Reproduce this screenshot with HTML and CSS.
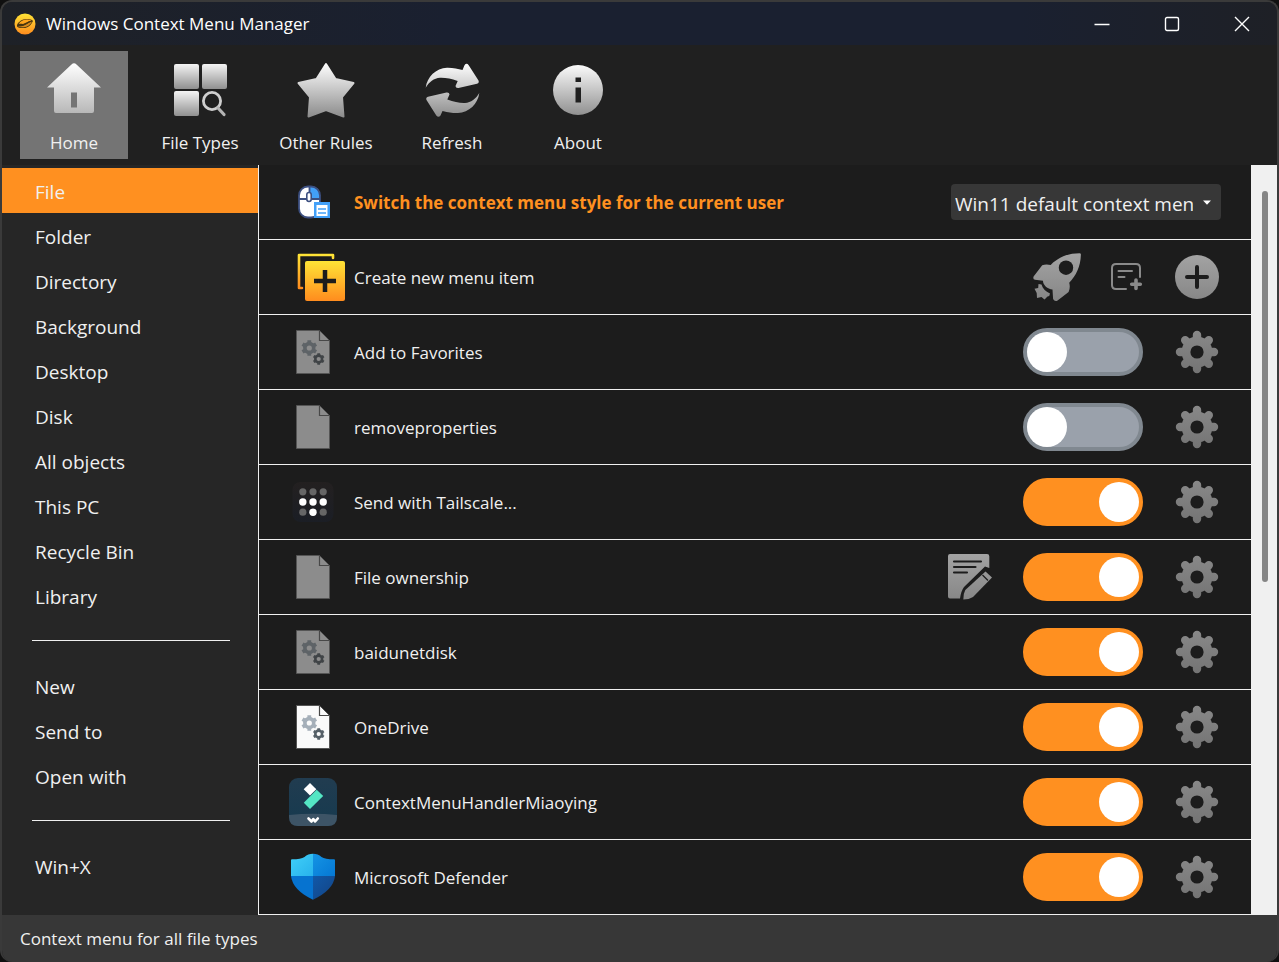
FILE: index.html
```html
<!DOCTYPE html>
<html lang="en">
<head>
<meta charset="utf-8">
<title>Windows Context Menu Manager</title>
<link rel="stylesheet" href="styles.css">
</head>
<body>
<svg class="defs" aria-hidden="true">
  <defs>
    <linearGradient id="silver" gradientUnits="userSpaceOnUse" x1="0" y1="6" x2="0" y2="60"><stop offset="0" stop-color="#ffffff"/><stop offset="1" stop-color="#8c8c8c"/></linearGradient>
    <linearGradient id="silver-light" x1="0" y1="0" x2="0" y2="1"><stop offset="0" stop-color="#ffffff"/><stop offset="1" stop-color="#b8b8b8"/></linearGradient>
    <linearGradient id="tile" x1="0" y1="0" x2="0" y2="1"><stop offset="0" stop-color="#f4f4f4"/><stop offset="1" stop-color="#909090"/></linearGradient>
    <linearGradient id="grey" gradientUnits="userSpaceOnUse" x1="0" y1="0" x2="0" y2="48"><stop offset="0" stop-color="#a4a4a4"/><stop offset="1" stop-color="#868686"/></linearGradient>
    <linearGradient id="gear-grey" gradientUnits="userSpaceOnUse" x1="0" y1="3" x2="0" y2="45"><stop offset="0" stop-color="#888888"/><stop offset="1" stop-color="#747474"/></linearGradient>
    <linearGradient id="amber" x1="0" y1="0" x2="0" y2="1"><stop offset="0" stop-color="#ffe436"/><stop offset="1" stop-color="#ff8c1e"/></linearGradient>
    <linearGradient id="film" x1="0" y1="0" x2="0" y2="1"><stop offset="0" stop-color="#213c50"/><stop offset="1" stop-color="#163a4f"/></linearGradient>
    <linearGradient id="shield-a" x1="0" y1="0" x2="1" y2="1"><stop offset="0" stop-color="#40d0f8"/><stop offset="1" stop-color="#28b2ec"/></linearGradient>
    <linearGradient id="shield-b" x1="0" y1="0" x2="1" y2="1"><stop offset="0" stop-color="#1594e4"/><stop offset="1" stop-color="#0578d4"/></linearGradient>
    <linearGradient id="shield-d" x1="0" y1="0" x2="1" y2="1"><stop offset="0" stop-color="#1158a8"/><stop offset="1" stop-color="#134484"/></linearGradient>
    <linearGradient id="tail" x1="0" y1="0" x2="0" y2="1"><stop offset="0" stop-color="#232020"/><stop offset="1" stop-color="#1b1e25"/></linearGradient>
  </defs>
  <symbol id="gear" viewBox="0 0 48 48">
    <circle cx="24" cy="24" r="15.4" fill="url(#gear-grey)"/>
    <path d="M24 7v34M7 24h34M12.2 12.2l23.6 23.6M35.8 12.2L12.2 35.8" stroke="url(#gear-grey)" stroke-width="8.4" stroke-linecap="round"/>
    <circle cx="24" cy="24" r="6.6" fill="#1c1c1c"/>
  </symbol>
  <symbol id="page" viewBox="0 0 56 50">
    <path d="M7.5 3.5h23l10 10v33h-33z" fill="currentColor" stroke="#555" stroke-width="1"/>
    <path d="M30.5 3.5v10h10" fill="none" stroke="#484848" stroke-width="1.2"/>
  </symbol>
  <symbol id="cogs" viewBox="0 0 56 50">
    <g fill="none" stroke="currentColor">
      <circle cx="20.3" cy="21" r="4.4" stroke-width="3.6"/>
      <path d="M20.3 13.2v3M20.3 25.800v3M13.500 17.100l2.700 1.600M24.400 23.300l2.700 1.600M27.100 17.100l-2.700 1.600M16.200 23.300l-2.700 1.600" stroke-width="3.8"/>
    </g>
    <g class="cog-small" fill="none">
      <circle cx="29.700" cy="32" r="3.400" stroke-width="2.600"/>
      <path d="M29.700 26.200v2.400M29.700 35.400v2.400M24.700 29.100l2 1.200M32.700 33.700l2 1.200M34.700 29.100l-2 1.200M26.700 33.700l-2 1.200" stroke-width="2.800"/>
    </g>
  </symbol>
</svg>

<div class="window">
  <header class="titlebar">
    <svg class="logo" viewBox="0 0 22 22" aria-hidden="true">
      <circle cx="11" cy="11" r="10.500" fill="url(#amber)"/>
      <path d="M3 13.500c-.8-3 4.500-7.500 9-7.500 3.500 0 6.200.4 7 2-2 4.500-5.500 7-9 7-2.500.2-5.500.3-7-1.500z" fill="#4b3710"/>
      <path d="M4.500 11c2-3 5-4.500 8-4.500 2 0 4 .2 5 1-3 .5-4.500 2.500-6.500 3.200-2 .7-4.500-.2-6.500.3z" fill="#ffa51d"/>
      <path d="M3.500 13c3 .8 5.500 0 8-1.300 2-1 4-2.400 6.500-3-2 3.500-5 5.300-8 5.500-2.500.2-5 .1-6.500-1.200z" fill="#d88a1c"/>
      <path d="M4 12.700c4 .4 7-2 12.500-4.500" stroke="#4b3710" stroke-width="1.200" fill="none"/>
    </svg>
    <h1>Windows Context Menu Manager</h1>
    <button class="caption" aria-label="Minimize"><svg viewBox="0 0 16 16"><path d="M.5 8.500h15"/></svg></button>
    <button class="caption" aria-label="Maximize"><svg viewBox="0 0 16 16"><rect x="1.500" y="1.500" width="13" height="13" rx="1.500"/></svg></button>
    <button class="caption" aria-label="Close"><svg viewBox="0 0 16 16"><path d="M1 1l14 14M15 1L1 15"/></svg></button>
  </header>

  <nav class="toolbar" aria-label="Sections">
    <button class="tool active">
      <svg viewBox="0 0 64 64"><path d="M29.500 7.500q2.500-2.500 5 0L59 30.500h-7V54q0 2-2 2H14q-2 0-2-2V30.500H5z" fill="url(#silver-light)"/><path d="M29 35.500h6v15h-6z" fill="#747474"/></svg>
      <span>Home</span>
    </button>
    <button class="tool">
      <svg viewBox="0 0 64 64"><g fill="url(#tile)"><rect x="6" y="7" width="25" height="25" rx="2"/><rect x="34" y="7" width="25" height="25" rx="2"/><rect x="6" y="34" width="25" height="25" rx="2"/></g><circle cx="44" cy="44" r="8.600" fill="none" stroke="#cfcfcf" stroke-width="2.800"/><path d="M50 51l6 6.500" stroke="#b4b4b4" stroke-width="3.200" stroke-linecap="round"/></svg>
      <span>File Types</span>
    </button>
    <button class="tool">
      <svg viewBox="0 0 64 64"><path d="M32 7l9.500 15 18 4L48 40l1.500 19.500L32 53l-17.500 6.500L16 40 4.500 26l18-4z" fill="url(#silver)" stroke="url(#silver)" stroke-width="2" stroke-linejoin="round"/></svg>
      <span>Other Rules</span>
    </button>
    <button class="tool">
      <svg viewBox="0 0 64 64"><path d="M5.700 30.700C7 20 16 11 27 10.700c6-.1 11 1 15.500 2.300l2-4.800q2-2.700 4.200 0L58.500 23.500q1 2.500-1.500 3.300l-18.500 4.200q-3 .3-3-2l2.200-5C31 21.500 25.500 20.500 20 20.700 14 21 9 25 5.700 30.700z" fill="url(#silver)"/><path d="M59.300 35.900C58 46.600 49 55.600 38 55.900c-6 .1-9-.5-15.500-2l-2 4.500q-2 2.700-4.200 0L6.500 43q-1-2.500 1.500-3.300l18.500-4.200q3-.3 3 2l-2.200 5c6.700 2.500 12.200 3.600 17.700 3.400 6-.3 11-4.300 14.300-10z" fill="url(#silver)"/></svg>
      <span>Refresh</span>
    </button>
    <button class="tool">
      <svg viewBox="0 0 64 64"><circle cx="32" cy="33" r="25" fill="url(#silver)"/><path d="M29.500 20.500H35V25h-5.500zM29.500 30.500H35v15h-5.500z" fill="#202020"/></svg>
      <span>About</span>
    </button>
  </nav>

  <div class="content">
    <nav class="sidebar" aria-label="Menu locations">
      <a class="selected" href="#file">File</a>
      <a href="#folder">Folder</a>
      <a href="#directory">Directory</a>
      <a href="#background">Background</a>
      <a href="#desktop">Desktop</a>
      <a href="#disk">Disk</a>
      <a href="#all">All objects</a>
      <a href="#pc">This PC</a>
      <a href="#bin">Recycle Bin</a>
      <a href="#library">Library</a>
      <hr>
      <a href="#new">New</a>
      <a href="#send">Send to</a>
      <a href="#open">Open with</a>
      <hr>
      <a href="#winx">Win+X</a>
    </nav>

    <main class="list">
      <div class="row">
        <svg class="icon" viewBox="0 0 56 50"><rect x="10" y="9.500" width="21" height="31" rx="9" fill="#fff"/><path d="M20.500 9.500h1.500q9 0 9 9V22H20.500z" fill="#42a0f8"/><rect x="10" y="9.500" width="21" height="31" rx="9" fill="none" stroke="#3c4f80" stroke-width="1.800"/><path d="M10 22h21M20.500 9.500v8" stroke="#3c4f80" stroke-width="1.800"/><rect x="17.800" y="15.500" width="4.400" height="9" rx="2.200" fill="#fff" stroke="#3c4f80" stroke-width="1.600"/><path d="M25 25h16v16H25z" fill="#42a0f8"/><path d="M27.500 28h11v11h-11z" fill="#fff"/><path d="M29 32h8M29 36h8" stroke="#42a0f8" stroke-width="1.500"/></svg>
        <label class="name accent" for="style">Switch the context menu style for the current user</label>
        <div class="combo">
          <select id="style"><option>Win11 default context men</option><option>Win10 classic context menu</option></select>
          <svg viewBox="0 0 8 5" aria-hidden="true"><path d="M0 .5h8L4 4.800z" fill="#fff"/></svg>
        </div>
      </div>
      <div class="row create">
        <svg class="icon" viewBox="0 0 56 50"><path d="M13 36h-3V3h34v3" fill="none" stroke="url(#amber)" stroke-width="2.600" stroke-linecap="round" stroke-linejoin="round"/><rect x="16" y="9" width="40" height="40" rx="2" fill="url(#amber)"/><path d="M36 18v22M25 29h22" stroke="#1c1c1c" stroke-width="4.500"/></svg>
        <span class="name">Create new menu item</span>
        <button class="action" aria-label="Enhanced menus"><svg viewBox="0 0 48 48"><path d="M46.500.2C38 .2 27 2.500 17.700 11.900q-5-1-8.500.3L.6 23.500q-1 3 1.500 3.200l7.900 1c-.2 4 4.500 8.500 9.500 8.700l.6 9.600q1.500 3 4.500 1.500l11-8.500q2-4.500.6-9.300C43 22.500 47.500 14 47.900 1.500q0-1.200-1.400-1.300z" fill="url(#grey)"/><circle cx="33" cy="14.700" r="7.200" fill="#1c1c1c"/><path d="M5.500 31l3 .5c1 4 4 7 8.500 9q0 2.500-2.500 3l-3 3-3-2.500-4.500 1-.3-5-2.200-4.200 3.700-.8z" fill="url(#grey)"/></svg></button>
        <button class="action" aria-label="Add from template"><svg viewBox="0 0 48 48" fill="none" stroke="#8a8a8a" stroke-linecap="round"><path d="M37 24v-9q0-4-4-4H13q-4 0-4 4v17q0 4 4 4h10M15.500 18H29M15.500 24h6" stroke-width="2"/><path d="M33 27v8.500M28.700 31.200h8.600" stroke-width="3.600"/></svg></button>
        <button class="action" aria-label="Add item"><svg viewBox="0 0 48 48"><circle cx="24" cy="24" r="22" fill="url(#grey)"/><path d="M24 14v20M14 24h20" stroke="#1c1c1c" stroke-width="4" stroke-linecap="round"/></svg></button>
      </div>
      <div class="row">
        <svg class="icon dim" viewBox="0 0 56 50"><use href="#page"/><use class="cogs" href="#cogs"/></svg>
        <label class="name" for="t1">Add to Favorites</label>
        <input class="switch" type="checkbox" id="t1">
        <button class="action" aria-label="Options"><svg><use href="#gear"/></svg></button>
      </div>
      <div class="row">
        <svg class="icon dim" viewBox="0 0 56 50"><use href="#page"/></svg>
        <label class="name" for="t2">removeproperties</label>
        <input class="switch" type="checkbox" id="t2">
        <button class="action" aria-label="Options"><svg><use href="#gear"/></svg></button>
      </div>
      <div class="row">
        <svg class="icon" viewBox="0 0 56 50"><rect x="3.500" y="5" width="41" height="40" rx="8" fill="url(#tail)"/><g fill="#666"><circle cx="13.800" cy="14.800" r="3.600"/><circle cx="24" cy="14.800" r="3.600"/><circle cx="34.200" cy="14.800" r="3.600"/><circle cx="13.800" cy="35.200" r="3.600"/><circle cx="34.200" cy="35.200" r="3.600"/></g><g fill="#fff"><circle cx="13.800" cy="25" r="3.700"/><circle cx="24" cy="25" r="3.700"/><circle cx="34.200" cy="25" r="3.700"/><circle cx="24" cy="35.200" r="3.700"/></g></svg>
        <label class="name" for="t3">Send with Tailscale...</label>
        <input class="switch" type="checkbox" id="t3" checked>
        <button class="action" aria-label="Options"><svg><use href="#gear"/></svg></button>
      </div>
      <div class="row">
        <svg class="icon dim" viewBox="0 0 56 50"><use href="#page"/></svg>
        <label class="name" for="t4">File ownership</label>
        <button class="action" aria-label="Edit"><svg viewBox="0 0 48 48"><path d="M5 1h37q2.300 0 2.300 2.300V15L40 13.500 19 34q-3 4-4 11.500H5q-2 0-2-2V3q0-2 2-2z" fill="url(#grey)"/><path d="M9 8.500h27M9 14h21.500M9 19.500h13" stroke="#1c1c1c" stroke-width="2.100" stroke-linecap="round"/><path d="M18.300 46.500q0-6 2-9.500L40.500 18.500l6.500 6L28 44q-4 2.500-9.700 2.500z" fill="url(#grey)"/><path d="M37.500 22l5.500 5.500" stroke="#1c1c1c" stroke-width="1.300"/></svg></button>
        <input class="switch" type="checkbox" id="t4" checked>
        <button class="action" aria-label="Options"><svg><use href="#gear"/></svg></button>
      </div>
      <div class="row">
        <svg class="icon dim" viewBox="0 0 56 50"><use href="#page"/><use class="cogs" href="#cogs"/></svg>
        <label class="name" for="t5">baidunetdisk</label>
        <input class="switch" type="checkbox" id="t5" checked>
        <button class="action" aria-label="Options"><svg><use href="#gear"/></svg></button>
      </div>
      <div class="row">
        <svg class="icon bright" viewBox="0 0 56 50"><use href="#page"/><use class="cogs" href="#cogs"/></svg>
        <label class="name" for="t6">OneDrive</label>
        <input class="switch" type="checkbox" id="t6" checked>
        <button class="action" aria-label="Options"><svg><use href="#gear"/></svg></button>
      </div>
      <div class="row">
        <svg class="icon" viewBox="0 0 56 50"><rect x="0" y="1" width="48" height="48" rx="9" fill="url(#film)"/><path d="M0 38q24-2.500 48 0v2q0 9-9 9H9q-9 0-9-9z" fill="#3d5466"/><path d="M21 6l6.300 6.300-6.300 6.300-6.300-6.300z" fill="#fff"/><path d="M27.700 12.800L34.200 19 21 32l-6.200-6.300z" fill="#54e6c4"/><path d="M19.500 41.500l3 3 1.800-2.500 1.800 2.500 2.700-3" fill="none" stroke="#fff" stroke-width="2.600" stroke-linecap="round" stroke-linejoin="round"/></svg>
        <label class="name" for="t7">ContextMenuHandlerMiaoying</label>
        <input class="switch" type="checkbox" id="t7" checked>
        <button class="action" aria-label="Options"><svg><use href="#gear"/></svg></button>
      </div>
      <div class="row">
        <svg class="icon" viewBox="0 0 56 50"><path d="M24 1.700q-5 0-8.500 3.300Q12 7.300 3 7.300q-1 0-1 1V24h22z" fill="url(#shield-a)"/><path d="M24 1.700q5 0 8.500 3.300 3.500 2.300 12.500 2.300 1 0 1 1V24H24z" fill="url(#shield-b)"/><path d="M2 24h22v23.700Q3.500 38 2 24z" fill="#0673d0"/><path d="M46 24H24v23.700Q44.500 38 46 24z" fill="url(#shield-d)"/></svg>
        <label class="name" for="t8">Microsoft Defender</label>
        <input class="switch" type="checkbox" id="t8" checked>
        <button class="action" aria-label="Options"><svg><use href="#gear"/></svg></button>
      </div>
    </main>
    <div class="scrollbar" aria-hidden="true"><div class="thumb"></div></div>
  </div>

  <footer class="status">Context menu for all file types</footer>
</div>
</body>
</html>
```

FILE: styles.css
```css
* {
  box-sizing: border-box;
}

body {
  margin: 0;
  height: 100vh;
  background: #101010;
  color: #f0f0f0;
  font-family: "Open Sans", "Noto Sans", sans-serif;
  font-size: 17px;
}

button,
select {
  margin: 0;
  padding: 0;
  border: 0;
  background: none;
  color: inherit;
  font: inherit;
}

svg {
  display: block;
}

.defs {
  position: absolute;
  width: 0;
  height: 0;
}

.window {
  display: flex;
  flex-direction: column;
  height: 100%;
  border: 2px solid #3a3a3a;
  border-bottom-width: 0;
  border-radius: 12px;
  overflow: hidden;
  background: #202020;
}

/* Title bar */
.titlebar {
  display: flex;
  align-items: center;
  flex: none;
  height: 43px;
  padding-left: 12px;
  background: linear-gradient(90deg, #1e2127, #1a2030 35%, #1a2030 80%, #1e2026);
}

.logo {
  width: 22px;
  height: 22px;
}

.titlebar h1 {
  flex: 1;
  margin: 0 0 0 10px;
  font-size: 17px;
  font-weight: 400;
  line-height: 24px;
  color: #fff;
}

.caption {
  display: grid;
  place-items: center;
  width: 70px;
  height: 100%;
}

.caption svg {
  width: 16px;
  height: 16px;
  fill: none;
  stroke: #fff;
  stroke-width: 1.4;
}

/* Toolbar */
.toolbar {
  display: flex;
  flex: none;
  gap: 18px;
  padding: 6px 18px;
}

.tool {
  display: flex;
  flex-direction: column;
  align-items: center;
  gap: 10px;
  width: 108px;
  height: 108px;
  padding-top: 6px;
}

.tool svg {
  width: 64px;
  height: 64px;
}

.tool span {
  line-height: 24px;
  white-space: nowrap;
}

.tool.active {
  background: #747474;
}

/* Body */
.content {
  display: flex;
  flex: 1;
  min-height: 0;
}

.sidebar {
  flex: none;
  width: 256px;
  padding-top: 3px;
  background: #262626;
  font-size: 19px;
}

.sidebar a {
  display: block;
  height: 45px;
  padding: 4px 33px 0;
  line-height: 41px;
  color: inherit;
  text-decoration: none;
}

.sidebar a.selected {
  background: #ff9020;
}

.sidebar hr {
  height: 1px;
  margin: 22px 28px 22px 30px;
  border: 0;
  background: #f0f0f0;
}

.list {
  flex: 1;
  min-width: 0;
  overflow: hidden;
  border-left: 1px solid #f0f0f0;
  background: #1c1c1c;
}

.row {
  display: flex;
  align-items: center;
  gap: 30px;
  height: 75px;
  padding: 0 30px;
  border-bottom: 1px solid #f0f0f0;
}

.row.create {
  gap: 22px;
}

.icon {
  flex: none;
  width: 56px;
  height: 50px;
}

.icon + .name {
  margin-left: -21px;
}

.create .icon + .name {
  margin-left: -13px;
}

.name {
  flex: 1;
  padding-top: 2px;
  line-height: 24px;
}

.accent {
  color: #ff9020;
  font-weight: 700;
}

.dim {
  color: #8c8c8c;
}

.dim .cogs {
  color: #5e6367;
  stroke: #404447;
}

.bright {
  color: #fafafa;
}

.bright .cogs {
  color: #a5afb9;
  stroke: #566068;
}

.action,
.action svg {
  flex: none;
  width: 48px;
  height: 48px;
}

.switch {
  appearance: none;
  flex: none;
  display: flex;
  width: 120px;
  height: 48px;
  margin: 0;
  border: 4px solid #808890;
  border-radius: 24px;
  background: #9aa1ab;
}

.switch::before {
  content: "";
  width: 40px;
  height: 40px;
  border-radius: 50%;
  background: #fff;
}

.switch:checked {
  justify-content: flex-end;
  border-color: #ff9020;
  background: #ff9020;
}

.combo {
  position: relative;
  width: 270px;
}

.combo select {
  appearance: none;
  width: 100%;
  height: 36px;
  padding: 3px 28px 0 4px;
  border-radius: 4px;
  background: #373737;
  font-size: 19px;
}

.combo svg {
  position: absolute;
  top: 16px;
  right: 10px;
  width: 8px;
  height: 5px;
}

.scrollbar {
  flex: none;
  width: 26px;
  padding: 26px 9px 0 11px;
  background: #f0f0f0;
}

.thumb {
  height: 54%;
  border-radius: 3px;
  background: #858585;
}

/* Status bar */
.status {
  flex: none;
  height: 47px;
  padding: 0 18px;
  line-height: 47px;
  background: #373737;
}
```
